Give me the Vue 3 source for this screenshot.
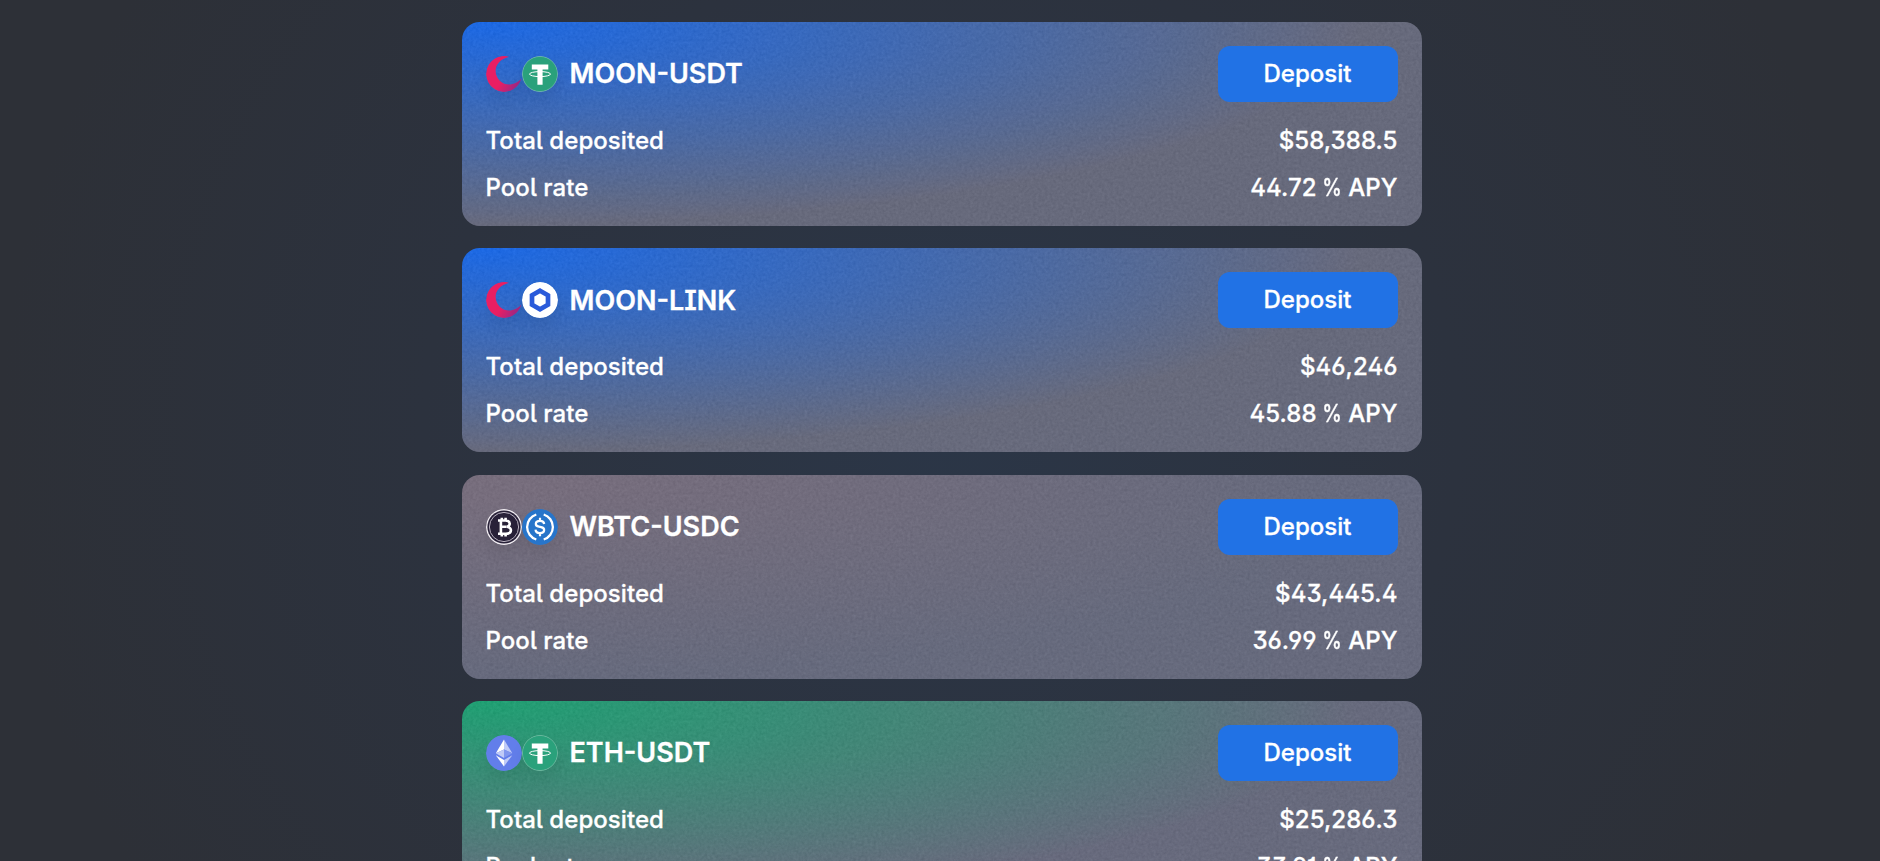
<script setup>
const pools = [
  { name: 'MOON-USDT', icons: ['moon', 'usdt'], total: '$58,388.5', rate: '44.72', theme: 'blue' },
  { name: 'MOON-LINK', icons: ['moon', 'link'], total: '$46,246', rate: '45.88', theme: 'blue' },
  { name: 'WBTC-USDC', icons: ['wbtc', 'usdc'], total: '$43,445.4', rate: '36.99', theme: 'mauve' },
  { name: 'ETH-USDT', icons: ['eth', 'usdt'], total: '$25,286.3', rate: '33.91', theme: 'green' }
]
</script>

<template>
  <main class="page">
    <section v-for="pool in pools" :key="pool.name" class="card" :class="pool.theme">
      <svg class="noise" aria-hidden="true">
        <filter id="grain" x="0" y="0" width="100%" height="100%" color-interpolation-filters="sRGB">
          <feTurbulence type="fractalNoise" baseFrequency="0.35" numOctaves="3" seed="4" />
          <feColorMatrix values="0.8 0.8 0 0 -0.34  0.8 0.8 0 0 -0.34  0.8 0.8 0 0 -0.34  0 0 0 0 1" />
        </filter>
        <rect width="100%" height="100%" filter="url(#grain)" />
      </svg>
      <header class="top">
        <div class="logos">
          <svg v-for="icon in pool.icons" :key="icon" class="logo" viewBox="0 0 36 36">
            <template v-if="icon === 'moon'">
              <defs>
                <linearGradient id="moon-fill" x1="0.35" y1="0.4" x2="1" y2="0.85">
                  <stop offset="0.3" stop-color="#e91e63" />
                  <stop offset="1" stop-color="#8e2a8b" />
                </linearGradient>
              </defs>
              <path d="M23.5.7A18 18 0 1 0 35.6 22.2C31 28 21 31.5 14 25C6.5 18 8 4 23.5.7Z" fill="url(#moon-fill)" />
            </template>
            <template v-else-if="icon === 'usdt'">
              <circle cx="18" cy="18" r="17.6" fill="#2aa17b" stroke="#8ac7b1" stroke-width=".7" />
              <path d="M9.8 8.5h16.5v5h-5.7v15.3h-5.2V13.5H9.8Z" fill="#fff" />
              <ellipse cx="18" cy="18.1" rx="10.5" ry="2.5" fill="none" stroke="#fff" stroke-width="1" />
            </template>
            <template v-else-if="icon === 'link'">
              <circle cx="18" cy="18" r="18" fill="#fff" />
              <path d="M18 8.7 26 13.3v9.4L18 27.3 10 22.7V13.3Z" fill="none" stroke="#2a5ada" stroke-width="4.7" />
            </template>
            <template v-else-if="icon === 'wbtc'">
              <circle cx="18" cy="18" r="18" fill="#f2eef3" />
              <circle cx="18" cy="18" r="16.6" fill="#282138" />
              <circle cx="18" cy="18" r="14.6" fill="none" stroke="#b9b2bf" stroke-width="1" />
              <path d="M12 11.5h7.5c5.5 0 5.5 6 .8 6.3 6.5.2 6 7-.6 7H12M14.9 11.5v13.3M14.5 17.8h5.5M15.8 8.8v3M19.6 8.8v3M15.8 24.5v3M19.6 24.5v3" fill="none" stroke="#fff" stroke-width="2.6" />
            </template>
            <template v-else-if="icon === 'usdc'">
              <circle cx="18" cy="18" r="18" fill="#2775ca" />
              <path d="M14.3 5.5a13.1 13.1 0 0 0 0 25M21.7 5.5a13.1 13.1 0 0 1 0 25" fill="none" stroke="#fff" stroke-width="2.3" />
              <path d="M22.2 15c-.3-2.3-1.8-3.2-4.2-3.2-5.4 0-5.4 5.3-1 5.9l2 .4c4.5.8 4.2 6.1-1 6.1-2.8 0-4.3-1.2-4.5-3.5M18 8.800v3M18 24.200v3" fill="none" stroke="#fff" stroke-width="2.2" />
            </template>
            <template v-else>
              <circle cx="18" cy="18" r="18" fill="#627eea" />
              <path d="M18 4.5v10L9.8 18.2Z" fill="#fff" />
              <path d="M18 4.5v10l8.3 3.7Z" fill="#c0cbf7" />
              <path d="M9.8 18.2 18 14.5V23Z" fill="#c0cbf7" />
              <path d="M26.3 18.2 18 14.5V23Z" fill="#8197ee" />
              <path d="M9.8 20.2 18 24.9v6.6Z" fill="#fff" />
              <path d="M26.3 20.2 18 24.9v6.6Z" fill="#c0cbf7" />
            </template>
          </svg>
        </div>
        <h2>{{ pool.name }}</h2>
        <button type="button">Deposit</button>
      </header>
      <div class="stat">
        <span>Total deposited</span>
        <span>{{ pool.total }}</span>
      </div>
      <div class="stat rate">
        <span>Pool rate</span>
        <span>{{ pool.rate }} <span class="percent">%</span> APY</span>
      </div>
    </section>
  </main>
</template>

<style>
body {
  margin: 0;
  overflow: hidden;
}
</style>

<style scoped>
.page {
  box-sizing: border-box;
  height: 861px;
  overflow: hidden;
  padding: 22px 0 0 4px;
  display: flex;
  flex-direction: column;
  align-items: center;
  gap: 22.3px;
  background: radial-gradient(50% 100% at 50% 50%, #2b3647 0%, #2c323e 55%, #2d3037 100%);
  color: #fff;
  font-family: Inter, sans-serif;
  font-feature-settings: 'ss01', 'ss02', 'cv01', 'cv03';
  font-size: 24px;
  font-weight: 500;
  letter-spacing: 0.06px;
  -webkit-text-stroke: 0.3px #fff;
}
.card {
  position: relative;
  box-sizing: border-box;
  flex: none;
  width: 960px;
  height: 204px;
  padding: 24px;
  border-radius: 18px;
  overflow: hidden;
}
.blue {
  background: radial-gradient(91.85% 100% at 1.84% 0%, #1769ec 0%, #676a7d 100%);
}
.mauve {
  background: radial-gradient(91.85% 100% at 1.84% 0%, #796e7e 0%, #666a7e 100%);
}
.green {
  background: radial-gradient(91.85% 100% at 1.84% 0%, #1ba373 0%, #676a7e 100%);
}
.noise {
  position: absolute;
  inset: 0;
  width: 100%;
  height: 100%;
  opacity: 0.06;
}
.top,
.stat {
  position: relative;
  display: flex;
  align-items: center;
}
.top {
  height: 56px;
}
.logos {
  display: flex;
  margin-right: 11.5px;
}
.logo {
  width: 36px;
  height: 36px;
  border-radius: 50%;
  box-shadow: 0 9px 15px rgba(0, 0, 0, 0.075);
}
h2 {
  margin: 0;
  padding-top: 0.8px;
  font-size: 27px;
  line-height: 36px;
  font-weight: 600;
  letter-spacing: 0;
}
button {
  width: 180px;
  height: 56px;
  margin-left: auto;
  padding: 0 1px 1px 0;
  border: 0;
  border-radius: 12px;
  background: #2172e5;
  color: #fff;
  font: inherit;
  font-feature-settings: inherit;
  cursor: pointer;
}
.stat {
  justify-content: space-between;
  margin: 24px 0.5px 0 -0.5px;
  line-height: 29px;
}
.rate {
  margin-top: 18px;
}
.percent {
  display: inline-block;
  margin: 0 -2.6px;
  transform: scaleX(0.82);
}
</style>
